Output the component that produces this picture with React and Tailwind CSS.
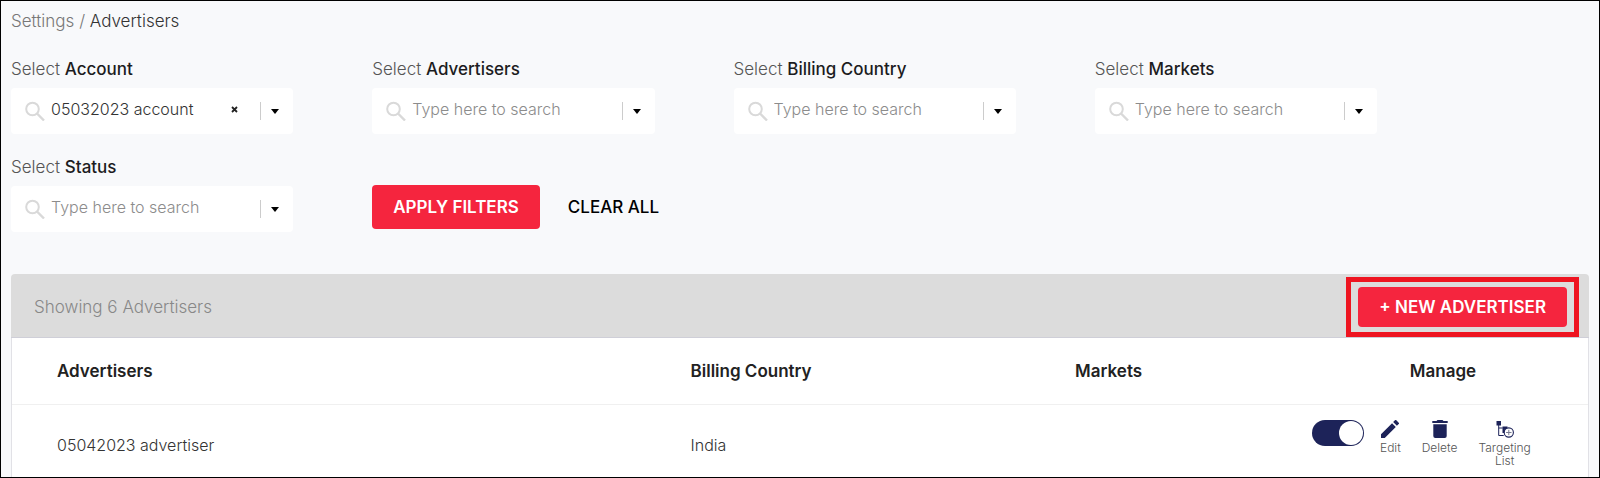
import { useState } from 'react';

const filters = [
  { id: 'account', label: 'Account', initial: '05032023 account' },
  { id: 'advertisers', label: 'Advertisers', initial: '' },
  { id: 'country', label: 'Billing Country', initial: '' },
  { id: 'markets', label: 'Markets', initial: '' },
  { id: 'status', label: 'Status', initial: '' },
];

const initialValues = Object.fromEntries(filters.map((f) => [f.id, f.initial]));

const advertisers = [{ name: '05042023 advertiser', country: 'India', markets: '' }];

function SearchIcon() {
  return (
    <svg viewBox="0 0 20 20" className="w-5 h-5 shrink-0" fill="none" stroke="#d9d9d9" strokeWidth="2">
      <circle cx="7.5" cy="8" r="6.3" />
      <path d="M12 12.5l7 7" strokeWidth="2.4" />
    </svg>
  );
}

function EditIcon() {
  return (
    <svg viewBox="3 3 18 18" className="w-[18px] h-[18px]" fill="#1d2359">
      <path d="M3 17.25V21h3.75L17.81 9.94l-3.75-3.75L3 17.25zM20.71 7.04a1 1 0 0 0 0-1.41l-2.34-2.34a1 1 0 0 0-1.41 0l-1.83 1.83 3.75 3.75 1.83-1.83z" />
    </svg>
  );
}

function DeleteIcon() {
  return (
    <svg viewBox="3 3 18 18" className="w-[18px] h-[18px]" fill="#1d2359">
      <path d="M5.3 7.2h13.4V19a2 2 0 0 1-2 2H7.3a2 2 0 0 1-2-2z" />
      <path d="M4.3 4h4.2l1-1h5l1 1h4.2v2H4.3z" />
    </svg>
  );
}

function TargetingIcon() {
  return (
    <svg viewBox="0 0 18 18" className="w-[18px] h-[18px]" fill="none" stroke="#1d2359">
      <path d="M0.5 1h4.5v4.5H0.5z" fill="#1d2359" stroke="none" />
      <path d="M2.7 5v10.5h5M2.7 8h4" />
      <path d="M6.5 6.5h5v3l-3 3.5h-2z" fill="#1d2359" stroke="none" />
      <circle cx="12.8" cy="12.5" r="4.6" fill="#fff" strokeWidth="1.1" />
      <path d="M12.8 9.8v5.4M10.1 12.5h5.4" stroke="#77798f" />
    </svg>
  );
}

function FilterSelect({ id, label, value, onChange }) {
  return (
    <div className="flex flex-col gap-[7px]">
      <label htmlFor={id} className="text-[17px] font-light leading-6 text-[#555]">
        Select <span className="font-medium text-[#1c1c1e]">{label}</span>
      </label>
      <div className="flex items-center h-[46px] rounded bg-white pl-3.5">
        <SearchIcon />
        <input
          id={id}
          type="text"
          value={value}
          onChange={(e) => onChange(e.target.value)}
          placeholder="Type here to search"
          className="flex-1 min-w-0 ml-1.5 pb-1 font-light leading-6 text-[#333] placeholder:text-[#8c8c8c] outline-none"
        />
        {value && (
          <button type="button" aria-label={`Clear ${label}`} onClick={() => onChange('')} className="px-[22px] pb-1">
            <svg viewBox="0 0 7 7" className="w-[7px] h-[7px]" stroke="#222" strokeWidth="1.8">
              <path d="M1 1l5 5M6 1L1 6" />
            </svg>
          </button>
        )}
        <button type="button" aria-label={`Open ${label}`} className="flex items-center h-[18px] border-l border-[#ccc] pl-2.5 pr-3.5">
          <svg viewBox="0 0 8 5" className="w-2 h-[5px]" fill="#000">
            <path d="M0 0h8L4 5z" />
          </svg>
        </button>
      </div>
    </div>
  );
}

function ActionButton({ icon, children }) {
  return (
    <button type="button" className="flex flex-col items-center gap-[3px] text-xs font-light leading-[13px] text-[#555]">
      {icon}
      <span>{children}</span>
    </button>
  );
}

export default function App() {
  const [values, setValues] = useState(initialValues);
  const [active, setActive] = useState(true);

  const clearAll = () => setValues(Object.fromEntries(filters.map((f) => [f.id, ''])));

  return (
    <div className="min-h-screen border border-black bg-[#f8f9fb] px-2.5 pt-2 font-['Inter',sans-serif] text-base text-[#333]">
      <nav className="text-[17px] font-light leading-6">
        <a href="#settings" className="text-[#777]">Settings</a>
        <span className="text-[#777]"> / </span>
        <span>Advertisers</span>
      </nav>

      <div className="mt-6 grid grid-cols-4 gap-x-[79px] gap-y-[21px] pr-[212px]">
        {filters.map((f) => (
          <FilterSelect
            key={f.id}
            id={f.id}
            label={f.label}
            value={values[f.id]}
            onChange={(v) => setValues((prev) => ({ ...prev, [f.id]: v }))}
          />
        ))}
        <div className="flex items-end gap-7 pb-[3px] whitespace-nowrap text-[17px]">
          <button type="button" className="h-11 rounded bg-[#f5253e] px-[21px] pt-0.5 font-semibold text-white">
            APPLY FILTERS
          </button>
          <button type="button" onClick={clearAll} className="h-11 pt-0.5 font-medium text-black">
            CLEAR ALL
          </button>
        </div>
      </div>

      <div className="mt-[42px]">
        <div className="flex items-center justify-between h-16 rounded-t border-b border-[#cfcfd8] bg-[#dcdcdc] pl-[23px] pr-2.5 pt-0.5 text-[17px]">
          <p className="pt-0.5 font-light text-[#888]">Showing 6 Advertisers</p>
          <div className="border-[5px] border-[#ee1420] px-[7px] py-[5px]">
            <button type="button" className="block h-10 rounded bg-[#f5253e] px-[21px] pt-0.5 font-semibold text-white">
              + NEW ADVERTISER
            </button>
          </div>
        </div>

        <div className="border-x border-[#e1e1e6] bg-white">
          <table className="w-full table-fixed text-left">
            <thead>
              <tr className="h-[66px] border-b border-[#f0f0f0] text-[17px] text-[#222]">
                <th className="w-[40.2%] pl-[45px] pt-0.5 font-semibold">Advertisers</th>
                <th className="w-[24.4%] pl-[45px] pt-0.5 font-semibold">Billing Country</th>
                <th className="w-[17%] pl-[45px] pt-0.5 font-semibold">Markets</th>
                <th className="pt-0.5 text-center font-semibold">Manage</th>
              </tr>
            </thead>
            <tbody>
              {advertisers.map((a) => (
                <tr key={a.name} className="h-[73px] align-top font-light">
                  <td className="pl-[45px] pt-7 leading-6">{a.name}</td>
                  <td className="pl-[45px] pt-7 leading-6">{a.country}</td>
                  <td className="pl-[45px] pt-7 leading-6">{a.markets}</td>
                  <td className="pl-3.5 pt-[15px]">
                    <div className="flex items-start">
                      <label className="flex w-[52px] h-[26px] shrink-0 cursor-pointer items-center rounded-full bg-[#9a9cb0] p-px has-checked:justify-end has-checked:bg-[#1d2359]">
                        <input
                          type="checkbox"
                          aria-label={`${a.name} active`}
                          checked={active}
                          onChange={(e) => setActive(e.target.checked)}
                          className="sr-only"
                        />
                        <span className="w-6 h-6 rounded-full bg-white" />
                      </label>
                      <div className="ml-4 flex items-start gap-[21px]">
                        <ActionButton icon={<EditIcon />}>Edit</ActionButton>
                        <ActionButton icon={<DeleteIcon />}>Delete</ActionButton>
                        <ActionButton icon={<TargetingIcon />}>
                          Targeting
                          <br />
                          List
                        </ActionButton>
                      </div>
                    </div>
                  </td>
                </tr>
              ))}
            </tbody>
          </table>
        </div>
      </div>
    </div>
  );
}
